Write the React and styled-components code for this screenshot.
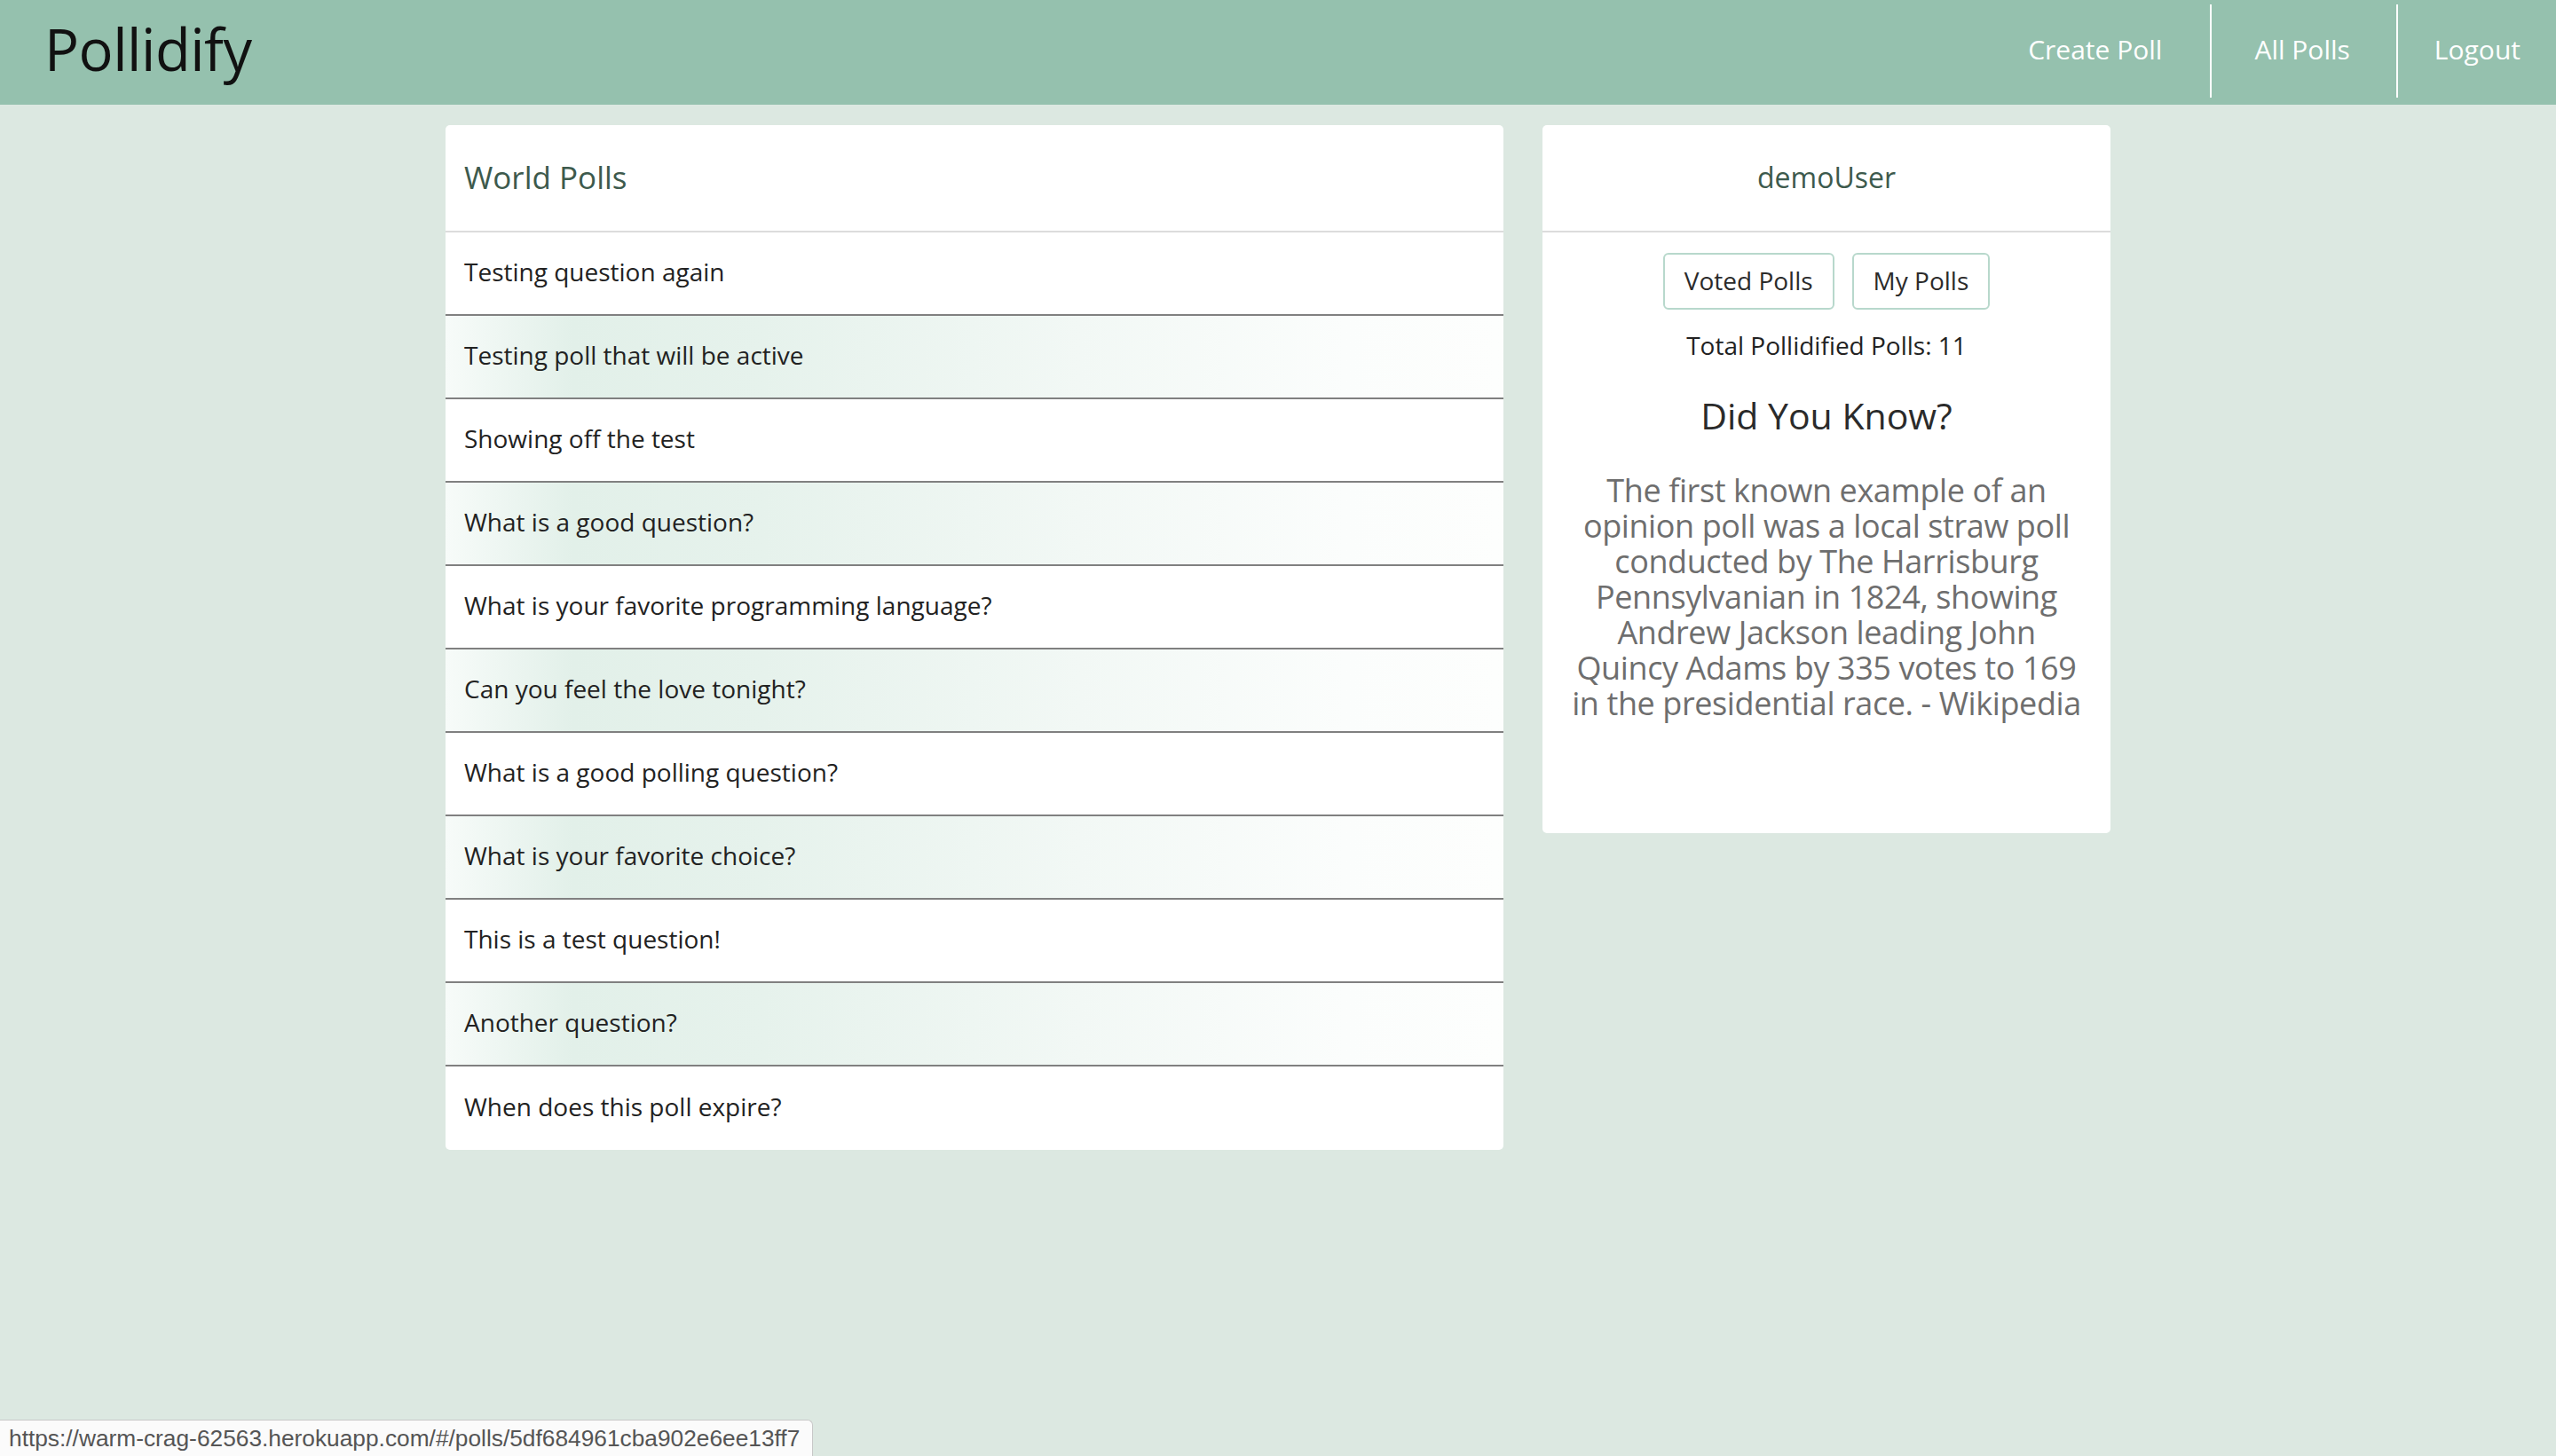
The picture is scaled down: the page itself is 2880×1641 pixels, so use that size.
import React from 'react'
import styled, { createGlobalStyle } from 'styled-components'

const polls = [
  'Testing question again',
  'Testing poll that will be active',
  'Showing off the test',
  'What is a good question?',
  'What is your favorite programming language?',
  'Can you feel the love tonight?',
  'What is a good polling question?',
  'What is your favorite choice?',
  'This is a test question!',
  'Another question?',
  'When does this poll expire?',
]

// line breaks kept as in the original layout
const factLines = [
  'The first known example of an',
  'opinion poll was a local straw poll',
  'conducted by The Harrisburg',
  'Pennsylvanian in 1824, showing',
  'Andrew Jackson leading John',
  'Quincy Adams by 335 votes to 169',
  'in the presidential race. - Wikipedia',
]

const GlobalStyle = createGlobalStyle`
  html, body {
    margin: 0;
    padding: 0;
    min-height: 100vh;
    background: #dce8e1;
    font-family: "Open Sans", "Noto Sans", sans-serif;
    color: #222;
  }
  * { box-sizing: border-box; }
`

const Header = styled.header`
  height: 118px;
  background: #95c1ae;
  display: flex;
  align-items: stretch;
  justify-content: space-between;
`

const Brand = styled.div`
  display: flex;
  align-items: center;
  padding-left: 50px;
  padding-bottom: 8px;
  font-size: 65px;
  color: #111;
  letter-spacing: -0.5px;
`

const Nav = styled.nav`
  display: flex;
  align-items: stretch;
  padding: 5px 0 8px;
`

const NavLink = styled.a`
  display: flex;
  align-items: center;
  padding: 0 ${p => p.pr}px 4px ${p => p.pl}px;
  font-size: 30px;
  color: #fff;
  text-decoration: none;
  border-left: ${p => (p.first ? 'none' : '2px solid #fff')};
  cursor: pointer;
`

const Main = styled.main`
  width: 1876px;
  margin: 23px auto 0;
  display: grid;
  grid-template-columns: 1192px 640px;
  gap: 44px;
  align-items: start;
`

const Card = styled.section`
  background: #fff;
  border-radius: 5px;
  overflow: hidden;
`

const CardHeader = styled.div`
  height: 121px;
  border-bottom: 2px solid #dcdcdc;
  display: flex;
  align-items: center;
  justify-content: ${p => (p.center ? 'center' : 'flex-start')};
  padding: 0 21px 2px;
  font-size: ${p => (p.center ? 32 : 35)}px;
  color: #3d5a4d;
`

const PollRow = styled.div`
  height: 94px;
  display: flex;
  align-items: center;
  padding: 0 21px 4px;
  font-size: 28px;
  color: #222;
  border-bottom: 2px solid #808080;
  cursor: pointer;
  &:nth-child(even) {
    background: linear-gradient(
      to right,
      #f7fbf9 0%,
      #e2f0e9 12%,
      #e6f2ec 30%,
      #f2f8f5 60%,
      #fbfdfc 85%,
      #fdfefd 100%
    );
  }
  &:last-child {
    border-bottom: none;
  }
`

const Body = styled.div`
  display: flex;
  flex-direction: column;
  align-items: center;
  padding: 23px 20px 126px;
`

const ButtonRow = styled.div`
  display: flex;
  gap: 20px;
`

const OutlineButton = styled.button`
  height: 64px;
  padding: 0 22px 3px;
  background: #fff;
  border: 2px solid #b8d8cc;
  border-radius: 6px;
  font-family: inherit;
  font-size: 28px;
  color: #2b2b2b;
  cursor: pointer;
`

const Total = styled.div`
  margin-top: 21px;
  font-size: 28px;
  color: #222;
`

const FactTitle = styled.h2`
  margin: 32px 0 0;
  font-size: 41px;
  font-weight: 400;
  color: #2b2b2b;
`

const Fact = styled.p`
  margin: 37px 0 0;
  font-size: 36px;
  line-height: 40px;
  text-align: center;
  white-space: nowrap;
  color: #6e6e6e;
  letter-spacing: -0.4px;
`

const StatusBar = styled.div`
  position: fixed;
  left: 0;
  bottom: 0;
  height: 41px;
  padding: 0 14px 0 10px;
  display: flex;
  align-items: center;
  background: #fbfbfb;
  border: 1px solid #c8c8c8;
  border-left: none;
  border-bottom: none;
  border-top-right-radius: 6px;
  font-family: "Liberation Sans", Arial, sans-serif;
  font-size: 26.3px;
  color: #555;
`

export default function App() {
  return (
    <>
      <GlobalStyle />
      <Header>
        <Brand>Pollidify</Brand>
        <Nav>
          <NavLink first pl={48} pr={54}>Create Poll</NavLink>
          <NavLink pl={48} pr={52}>All Polls</NavLink>
          <NavLink pl={41} pr={40}>Logout</NavLink>
        </Nav>
      </Header>
      <Main>
        <Card>
          <CardHeader>World Polls</CardHeader>
          <div>
            {polls.map(q => (
              <PollRow key={q}>{q}</PollRow>
            ))}
          </div>
        </Card>
        <Card>
          <CardHeader center>demoUser</CardHeader>
          <Body>
            <ButtonRow>
              <OutlineButton>Voted Polls</OutlineButton>
              <OutlineButton>My Polls</OutlineButton>
            </ButtonRow>
            <Total>Total Pollidified Polls: 11</Total>
            <FactTitle>Did You Know?</FactTitle>
            <Fact>
              {factLines.map((line, i) => (
                <React.Fragment key={i}>
                  {line}
                  {i < factLines.length - 1 && <br />}
                </React.Fragment>
              ))}
            </Fact>
          </Body>
        </Card>
      </Main>
      <StatusBar>https://warm-crag-62563.herokuapp.com/#/polls/5df684961cba902e6ee13ff7</StatusBar>
    </>
  )
}
